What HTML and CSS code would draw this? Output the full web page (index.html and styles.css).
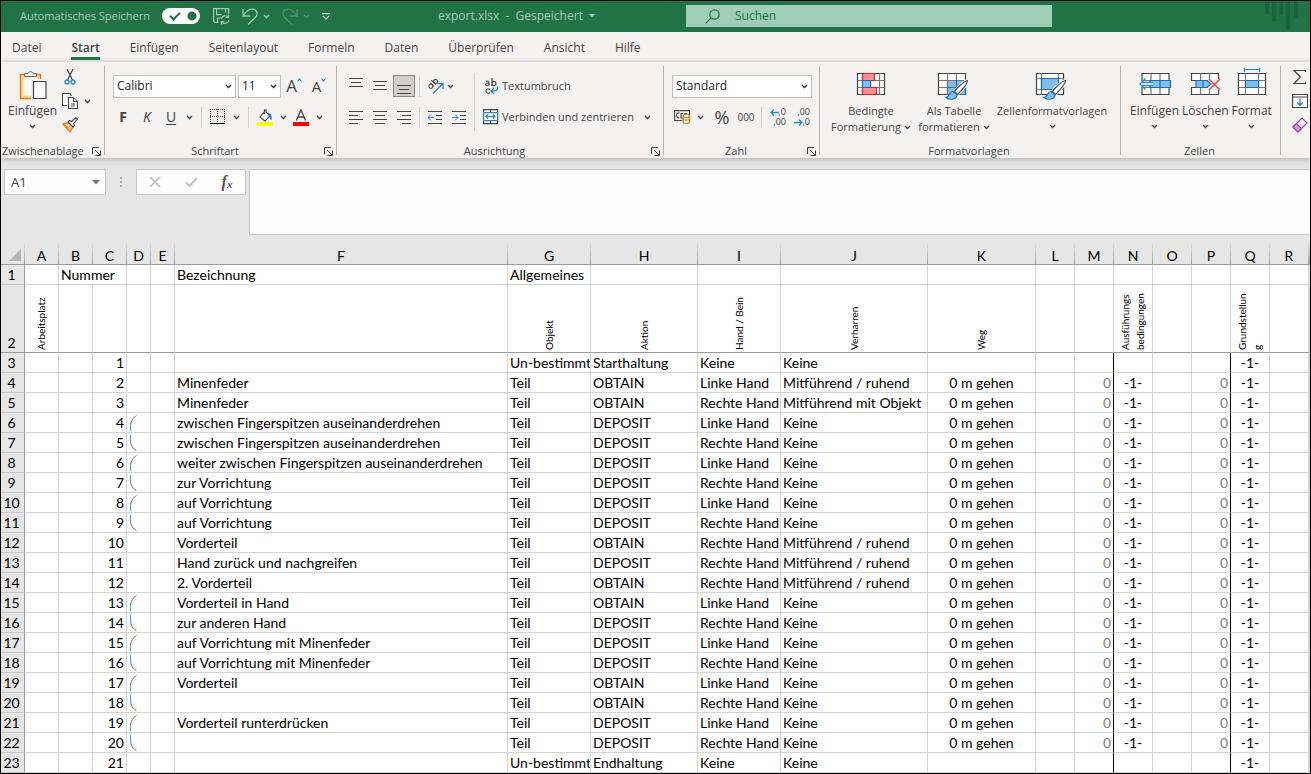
FILE: index.html
```html
<!DOCTYPE html>
<html lang="de">
<head>
<meta charset="utf-8">
<title>export.xlsx</title>
<link rel="stylesheet" href="styles.css">
</head>
<body>
<svg class="defs" aria-hidden="true">
  <symbol id="chev" viewBox="0 0 7 5"><path d="M1 1l2.500 2.500L6 1" fill="none" stroke="currentColor" stroke-width="1.300"/></symbol>
  <symbol id="launch" viewBox="0 0 9 9"><path d="M.5 7V.5H7M3 3l5 5M8.500 3.500v5h-5" fill="none" stroke="#444"/></symbol>
  <symbol id="arc-top" viewBox="0 0 8 16"><path d="M7.500.5C4 2.500 2 6 1.500 10" fill="none" stroke="#86705f"/><path d="M1.500 8v8" stroke="#5aa0e0" stroke-width="1.200"/></symbol>
  <symbol id="arc-bot" viewBox="0 0 8 16"><path d="M7.500 15.500C4 14 2 11 1.500 7" fill="none" stroke="#86705f"/><path d="M1.500 0v8" stroke="#5aa0e0" stroke-width="1.200"/></symbol>
</svg>
<header class="titlebar">
  <div class="quick">
    <label class="autosave">Automatisches Speichern
      <input type="checkbox" class="toggle" checked>
    </label>
    <button class="ico" aria-label="Speichern"><svg width="17" height="17" viewBox="0 0 17 17" fill="none" stroke="#a0cdb5" stroke-width="1.200"><path d="M5.500 14.500H2L.6 13V.6h15V6M3.600.6v6h5M12.500.6v4M4.500 14.500v-4.500h3M8.200 11a4 4 0 0 1 7-1.800M15.500 6.500v3h-3M16 12a4 4 0 0 1-7 2M8.500 16.500v-3h3"/></svg></button>
    <button class="ico" aria-label="Rückgängig"><svg width="16" height="17" viewBox="0 0 16 17" fill="none" stroke="#a0cdb5" stroke-width="1.300"><path d="M1 1v7h7M1.500 7.500C4 3.500 7 1.200 10 1.200c5 0 6.500 5 3.500 8L6 16.500"/></svg></button>
    <button class="mini" aria-label="Rückgängig-Liste"><svg width="7" height="5"><use href="#chev"/></svg></button>
    <button class="ico dim" aria-label="Wiederholen"><svg width="16" height="17" viewBox="0 0 16 17" fill="none" stroke="#a0cdb5" stroke-width="1.300"><path d="M15 1v7H8M14.500 7.500C12 3.500 9 1.200 6 1.200c-5 0-6.500 5-3.500 8L10 16.500"/></svg></button>
    <button class="mini dim" aria-label="Wiederholen-Liste"><svg width="7" height="5"><use href="#chev"/></svg></button>
    <button class="mini qat" aria-label="Symbolleiste anpassen"><svg width="8" height="7" viewBox="0 0 8 7" fill="none" stroke="#c3e0d0" stroke-width="1.200"><path d="M0 .6h8M1 3l3 3 3-3"/></svg></button>
  </div>
  <div class="doc">export.xlsx&nbsp; -&nbsp; Gespeichert <svg width="6" height="4" viewBox="0 0 6 4"><path d="M0 0h6L3 3.500z" fill="#a0cdb5"/></svg></div>
  <label class="search"><svg width="15" height="15" viewBox="0 0 15 15" fill="none" stroke="#217346" stroke-width="1.200"><circle cx="9.500" cy="5.500" r="4.700"/><path d="M6.200 8.800L.6 14.400"/></svg><input type="text" placeholder="Suchen" aria-label="Suchen"></label>
  <svg class="deco" width="36" height="30" viewBox="0 0 36 30" fill="#1d6340"><path d="M0 0h4v13H0zM7 0h4v20H7zM14 0h4v14h-4zM21 0h4v29h-4zM29 0h4v17h-4z"/></svg>
</header>
<nav class="tabs">
  <a href="#">Datei</a><a href="#" class="on">Start</a><a href="#">Einfügen</a><a href="#">Seitenlayout</a><a href="#">Formeln</a><a href="#">Daten</a><a href="#">Überprüfen</a><a href="#">Ansicht</a><a href="#">Hilfe</a>
</nav>
<main class="ribbon">
  <section class="group clip">
    <div class="body">
      <button class="big"><svg width="28" height="30" viewBox="0 0 28 30"><path d="M1.500 4.500h20v24h-20z" fill="#fbd98a" stroke="#e07b16" stroke-width="1.400"/><path d="M4.500 7.500h14v18h-14z" fill="#fafafa"/><path d="M5.500 6.500v-3h3.500a2.600 2.600 0 0 1 5 0h3.500v3z" fill="#fff" stroke="#6a6a6a"/><path d="M13.500 10.500h14v18h-14z" fill="#fff" stroke="#f3f2f1" stroke-width="3"/><path d="M14.500 11.500h12.500v17H14.500z" fill="#fff" stroke="#444" stroke-width="1.200"/></svg><span>Einfügen</span><svg class="chev" width="7" height="5"><use href="#chev"/></svg></button>
      <div class="stack">
        <button class="s" aria-label="Ausschneiden"><svg width="16" height="16" viewBox="0 0 16 16" fill="none"><path d="M5 0l5.500 11M11 0L5.500 11" stroke="#444" stroke-width="1.200"/><circle cx="5" cy="13" r="2" stroke="#2b88c8" stroke-width="1.300"/><circle cx="11" cy="13" r="2" stroke="#2b88c8" stroke-width="1.300"/></svg></button>
        <button class="s" aria-label="Kopieren"><svg width="16" height="16" viewBox="0 0 16 16" fill="#fff" stroke="#444" stroke-width="1.100"><path d="M5 12.500H.5V.5H8L9.500 3"/><path d="M6.500 4.500h5l4 4v7h-9z"/><path d="M11.500 4.500v4h4M9 11h4M9 13h4"/></svg><svg class="chev" width="7" height="5"><use href="#chev"/></svg></button>
        <button class="s" aria-label="Format übertragen"><svg width="16" height="16" viewBox="0 0 16 16"><path d="M1 7l6-1.500 4 4L8 15z" fill="#fbd0a0" stroke="#e07b16" stroke-width="1.300"/><path d="M3 9l3 1M5 12l2-1.500" stroke="#e07b16"/><path d="M6 5l5 5 1.500-1.500-1-2L15.500 2 14 .6 9.500 4.500l-2-1z" fill="#fff" stroke="#444" stroke-width="1.100"/></svg></button>
      </div>
    </div>
    <h2>Zwischenablage<button class="launch" aria-label="Zwischenablage öffnen"><svg width="9" height="9"><use href="#launch"/></svg></button></h2>
  </section>
  <section class="group font">
    <div class="rows">
      <div class="row">
        <label class="combo wide"><select aria-label="Schriftart"><option>Calibri</option></select><svg width="7" height="5"><use href="#chev"/></svg></label>
        <label class="combo num"><select aria-label="Schriftgrad"><option>11</option></select><svg width="7" height="5"><use href="#chev"/></svg></label>
        <button class="t grow" aria-label="Schriftgrad vergrößern"><b class="l1">A</b><svg width="5" height="4" viewBox="0 0 5 4"><path d="M.5 3.500l2-2.500 2 2.500" fill="none" stroke="#2b88c8" stroke-width="1.200"/></svg></button>
        <button class="t grow" aria-label="Schriftgrad verkleinern"><b class="l2">A</b><svg width="5" height="4" viewBox="0 0 5 4"><path d="M.5.5l2 2.500 2-2.500" fill="none" stroke="#2b88c8" stroke-width="1.200"/></svg></button>
      </div>
      <div class="row">
        <button class="t bold">F</button><button class="t ital">K</button><button class="t und">U</button><button class="c" aria-label="Unterstreichung"><svg width="7" height="5"><use href="#chev"/></svg></button>
        <i class="sep"></i>
        <button class="t" aria-label="Rahmen"><svg width="16" height="16" viewBox="0 0 16 16" shape-rendering="crispEdges"><path d="M0 .5h15M.5 0v14M14.500 0v14M7.500 0v14M0 7.500h15" stroke="#444" stroke-dasharray="1 1"/><path d="M0 14.500h15" stroke="#000" stroke-width="1"/></svg></button><button class="c" aria-label="Rahmenarten"><svg width="7" height="5"><use href="#chev"/></svg></button>
        <i class="sep"></i>
        <button class="t" aria-label="Füllfarbe"><svg width="17" height="17" viewBox="0 0 17 17"><path d="M8 2L3 8l5 4 5-5-4-4V.8L7.500 1v4" fill="#fff" stroke="#444" stroke-width="1.100"/><path d="M11 4.500c2.500 0 3.500 2 3 6-.5-2-1-3-2-4" fill="#1e6fae" stroke="#1e6fae"/><path d="M0 13h16v4H0z" fill="#ff0"/></svg></button><button class="c" aria-label="Füllfarben"><svg width="7" height="5"><use href="#chev"/></svg></button>
        <button class="t" aria-label="Schriftfarbe"><svg width="16" height="17" viewBox="0 0 16 17"><path d="M3.500 11.500L8 .8l4.500 10.700M5 8h6" fill="none" stroke="#444" stroke-width="1.300"/><path d="M0 13h16v4H0z" fill="red"/></svg></button><button class="c" aria-label="Schriftfarben"><svg width="7" height="5"><use href="#chev"/></svg></button>
      </div>
    </div>
    <h2><span>Schriftart</span><button class="launch" aria-label="Schriftart öffnen"><svg width="9" height="9"><use href="#launch"/></svg></button></h2>
  </section>
  <section class="group align">
    <div class="cols">
      <div class="rows">
        <div class="row">
          <button class="t" aria-label="Oben"><svg class="ln" viewBox="0 0 14 16"><path d="M0 .5h14M2 4.500h10M0 8.500h14"/></svg></button><button class="t" aria-label="Mitte"><svg class="ln" viewBox="0 0 14 16"><path d="M0 3.500h14M2 7.500h10M0 11.500h14"/></svg></button><button class="t on" aria-label="Unten"><svg class="ln" viewBox="0 0 14 16"><path d="M0 7.500h14M2 11.500h10M0 15.500h14"/></svg></button>
          <i class="sep"></i>
          <button class="t" aria-label="Ausrichtung"><svg width="17" height="16" viewBox="0 0 17 16" fill="none" stroke="#444" stroke-width="1.100"><g transform="rotate(-45 6 6)"><circle cx="3" cy="6" r="2"/><path d="M5 3.500v5M7.500 2v6.500"/><circle cx="9.500" cy="6" r="2"/></g><path d="M6 15.500L15.500 6M10.500 5.500h5.500v5.500" stroke="#2b88c8" stroke-width="1.300"/></svg></button><button class="c" aria-label="Ausrichtungen"><svg width="7" height="5"><use href="#chev"/></svg></button>
        </div>
        <div class="row">
          <button class="t" aria-label="Links"><svg class="ln" viewBox="0 0 14 16"><path d="M0 2.500h14M0 6.500h9M0 10.500h14M0 14.500h9"/></svg></button><button class="t" aria-label="Zentriert"><svg class="ln" viewBox="0 0 14 16"><path d="M0 2.500h14M2 6.500h10M0 10.500h14M2 14.500h10"/></svg></button><button class="t" aria-label="Rechts"><svg class="ln" viewBox="0 0 14 16"><path d="M0 2.500h14M5 6.500h9M0 10.500h14M5 14.500h9"/></svg></button>
          <i class="sep"></i>
          <button class="t" aria-label="Einzug verkleinern"><svg class="ln" viewBox="0 0 14 16"><path d="M0 2.500h14M8 6.500h6M8 10.500h6M0 14.500h14"/><path class="bl" d="M0 8.500h6M3 5.500l-3 3 3 3"/></svg></button><button class="t" aria-label="Einzug vergrößern"><svg class="ln" viewBox="0 0 14 16"><path d="M0 2.500h14M8 6.500h6M8 10.500h6M0 14.500h14"/><path class="bl" d="M0 8.500h6M3 5.500l3 3-3 3"/></svg></button>
        </div>
      </div>
      <i class="sep tall"></i>
      <div class="rows">
        <button class="row txt"><svg width="16" height="17" viewBox="0 0 16 17" fill="none" stroke="#444" stroke-width="1.200"><path d="M3 3.500c3-1 3 .5 3 4M6 5C3 5 2.500 5.500 2.500 6.500 2.500 8 6 8 6 6M9 0v8M9 4.500c2-2 4-1 4 1s-2 3-4 1M7 11.500c-2-1.500-4-.5-4 1.500s2 3 4 1.500"/><path d="M14.500 8.500c0 4-1 4.500-6 4.500M11 10l-3 3 3 3" stroke="#2b88c8" stroke-width="1.400"/></svg>Textumbruch</button>
        <button class="row txt"><svg width="16" height="16" viewBox="0 0 16 16" fill="#fff" stroke="#444" stroke-width="1.200"><path d="M.6.6h14v14H.6zM7.500.6v14"/><path d="M.6 3.600h14v8H.6zM3 7.600h9M5 5.500L3 7.600l2 2.100M10 5.500l2 2.100-2 2.100" stroke="#2b88c8"/></svg>Verbinden und zentrieren<svg class="chev" width="7" height="5"><use href="#chev"/></svg></button>
      </div>
    </div>
    <h2><span>Ausrichtung</span><button class="launch" aria-label="Ausrichtung öffnen"><svg width="9" height="9"><use href="#launch"/></svg></button></h2>
  </section>
  <section class="group number">
    <div class="rows">
      <div class="row"><label class="combo full"><select aria-label="Zahlenformat"><option>Standard</option></select><svg width="7" height="5"><use href="#chev"/></svg></label></div>
      <div class="row">
        <button class="t" aria-label="Währung"><svg width="17" height="14" viewBox="0 0 17 14" fill="none" stroke="#444" stroke-width="1.100"><path d="M8 10.500H.6V.6h15V5M5.500 3C3 2.500 2.500 4 2.500 5.500S3.500 8 5.500 8M9 8H7V3.500h2M11 5V3.500h2"/><path d="M9 6v6c0 2 6.500 2 6.500 0V6c0-2-6.500-2-6.500 0c0 2 6.500 2 6.500 0M9 9c0 1.500 6.500 1.500 6.500 0" fill="#fff" stroke="#e07b16" stroke-width="1.200"/></svg></button><button class="c" aria-label="Währungen"><svg width="7" height="5"><use href="#chev"/></svg></button>
        <button class="t pct">%</button><button class="t zeros">000</button>
        <i class="sep"></i>
        <button class="t dec" aria-label="Dezimalstelle hinzufügen"><span><svg width="9" height="7" viewBox="0 0 9 7"><path d="M9 3.500H1M4 .5l-3 3 3 3" fill="none" stroke="#2b88c8" stroke-width="1.300"/></svg>,0</span><span>,00</span></button><button class="t dec" aria-label="Dezimalstelle entfernen"><span>,00</span><span><svg width="9" height="7" viewBox="0 0 9 7"><path d="M0 3.500h8M5 .5l3 3-3 3" fill="none" stroke="#2b88c8" stroke-width="1.300"/></svg>,0</span></button>
      </div>
    </div>
    <h2><span>Zahl</span><button class="launch" aria-label="Zahl öffnen"><svg width="9" height="9"><use href="#launch"/></svg></button></h2>
  </section>
  <section class="group styles">
    <div class="body">
      <button class="big w1"><svg width="30" height="30" viewBox="0 0 30 30" stroke-width="1.200"><path d="M1.500 2.500h27v21h-27z" fill="#fff" stroke="#444"/><path d="M1.500 9.500h27M1.500 16.500h27M6.500 2.500v21M23.500 2.500v21" stroke="#777"/><path d="M6.500 2.500h12v7h-12zM6.500 16.500h14v7h-14z" fill="#ff8f96" stroke="#d9202a"/><path d="M6.500 9.500h8v7h-8z" fill="#83beec" stroke="#1a6fb8"/></svg><span>Bedingte</span><span>Formatierung <svg width="7" height="5"><use href="#chev"/></svg></span></button>
      <button class="big w2"><svg width="34" height="30" viewBox="0 -1 34 30" stroke-width="1.200"><path d="M1.500 1.500h27v21h-27z" fill="#fff" stroke="#444"/><path d="M10.500 8.500h18v14h-18z" fill="#83beec" stroke="#1a6fb8"/><path d="M1.500 8.500h27M1.500 15.500h27M10.500 1.500v21M19.500 1.500v21" stroke="#777"/><path d="M10.500 15.500h18M19.500 8.500v14" stroke="#1a6fb8"/><path d="M30.500 8.500C27 9 19 17 17.500 19.500l3 3C23 20 30.500 12 30.500 8.500z" fill="#fff" stroke="#f3f2f1" stroke-width="3"/><path d="M30.500 8.500C27 9 19 17 17.500 19.500l3 3C23 20 30.500 12 30.500 8.500z" fill="#fff" stroke="#555"/><path d="M16 19.500c-4 0-3 5-7 6 4 3 11 2 11-3z" fill="#83beec" stroke="#1a6fb8"/></svg><span>Als Tabelle</span><span>formatieren <svg width="7" height="5"><use href="#chev"/></svg></span></button>
      <button class="big w3"><svg width="34" height="30" viewBox="0 -1 34 30" stroke-width="1.200"><path d="M1.500 1.500h27v21h-27z" fill="#fff" stroke="#444"/><path d="M1.500 6.500h27M1.500 17.500h27M6.500 1.500v21M23.500 1.500v21" stroke="#777"/><path d="M6.500 6.500h17v11h-17z" fill="#83beec" stroke="#1a6fb8"/><path d="M30.500 8.500C27 9 19 17 17.500 19.500l3 3C23 20 30.500 12 30.500 8.500z" fill="#fff" stroke="#f3f2f1" stroke-width="3"/><path d="M30.500 8.500C27 9 19 17 17.500 19.500l3 3C23 20 30.500 12 30.500 8.500z" fill="#fff" stroke="#555"/><path d="M16 19.500c-4 0-3 5-7 6 4 3 11 2 11-3z" fill="#83beec" stroke="#1a6fb8"/></svg><span>Zellenformatvorlagen</span><svg class="chev" width="7" height="5"><use href="#chev"/></svg></button>
    </div>
    <h2><span>Formatvorlagen</span></h2>
  </section>
  <section class="group cells">
    <div class="body">
      <button class="big"><svg width="32" height="30" viewBox="0 -1 32 30" stroke-width="1.200"><path d="M3 1.500h27v21H3z" fill="#fff" stroke="#444"/><path d="M3 8.500h27M3 15.500h27M12 1.500v21M21 1.500v21" stroke="#777"/><path d="M0 9h14v6H0z" fill="#f3f2f1"/><path d="M11 8.500h20.500v7H11zM21 8.500v7" fill="#83beec" stroke="#1a6fb8"/><path d="M2 10.500h12v3H2z" fill="#fff"/><path d="M14 10.500H3M14 13.500H3M6.500 6.500L1 12l5.500 5.500" fill="none" stroke="#2b88c8" stroke-width="1.300"/></svg><span>Einfügen</span><svg class="chev" width="7" height="5"><use href="#chev"/></svg></button>
      <button class="big"><svg width="32" height="30" viewBox="0 -1 32 30" stroke-width="1.200"><path d="M2.500 8.500v-7h27v7zM2.500 15.500v7h27v-7z" fill="#fff" stroke="#444"/><path d="M11.500 1.500v7M20.500 1.500v7M11.500 15.500v7M20.500 15.500v7" stroke="#777"/><path d="M19 7h12v11H19z" fill="#f3f2f1"/><path d="M7 8.500h11l4 3.500-4 3.500H7zM14 8.500v7" fill="#83beec" stroke="#1a6fb8"/><path d="M20 7l11 11M31 7L20 18" stroke="#e8484c" stroke-width="1.500"/></svg><span>Löschen</span><svg class="chev" width="7" height="5"><use href="#chev"/></svg></button>
      <button class="big"><svg width="30" height="30" viewBox="0 5 30 30" stroke-width="1.200"><path d="M1.500 7.500h27v21h-27z" fill="#fff" stroke="#444"/><path d="M1.500 14.500h27M1.500 21.500h27M8.500 7.500v21M21.500 7.500v21" stroke="#777"/><path d="M8.500 14.500h13v7h-13z" fill="#83beec" stroke="#1a6fb8"/><path d="M7.500 2v4M22.500 2v4M7.500 3.500h15" stroke="#2b88c8"/></svg><span>Format</span><svg class="chev" width="7" height="5"><use href="#chev"/></svg></button>
    </div>
    <h2><span>Zellen</span></h2>
  </section>
  <section class="group edit">
    <div class="stack">
      <button class="s" aria-label="Summe"><svg width="16" height="16" viewBox="0 0 16 16" fill="none" stroke="#444" stroke-width="1.200"><path d="M13.500 3V1.500H2L8.500 8 2 14.500h11.500V13"/></svg></button>
      <button class="s" aria-label="Füllbereich"><svg width="16" height="16" viewBox="0 0 16 16" fill="#fff" stroke="#444" stroke-width="1.200"><path d="M.6 1.500h15v13H.6zM.6 4h15"/><path d="M8 5.500v7M5 9.500l3 3 3-3" fill="none" stroke="#2b88c8" stroke-width="1.300"/></svg></button>
      <button class="s" aria-label="Löschen"><svg width="16" height="16" viewBox="0 0 16 16" stroke="#9b3fa5" stroke-width="1.200"><path d="M1 10L10 1l5 5-9 9z" fill="#fff"/><path d="M1 10l3.500-3.500 5 5L6 15z" fill="#d59bdb"/></svg></button>
    </div>
  </section>
</main>
<div class="formula">
  <label class="name"><input type="text" value="A1" aria-label="Namenfeld"><svg width="8" height="5" viewBox="0 0 8 5"><path d="M0 0h8L4 4.500z" fill="#777"/></svg></label>
  <svg class="dots" width="3" height="11" viewBox="0 0 3 11" fill="#aaa"><path d="M0 0h2v2H0zM0 4h2v2H0zM0 8h2v2H0z"/></svg>
  <div class="fx">
    <button aria-label="Abbrechen"><svg width="12" height="10" viewBox="0 0 12 10"><path d="M1 0l10 10M11 0L1 10" stroke="#bdbdbd" stroke-width="1.600"/></svg></button>
    <button aria-label="Eingeben"><svg width="13" height="10" viewBox="0 0 13 10"><path d="M1 5.500L4.500 9 12 1" fill="none" stroke="#c4c4c4" stroke-width="2"/></svg></button>
    <button class="fn" aria-label="Funktion einfügen">f<sub>x</sub></button>
  </div>
  <textarea aria-label="Bearbeitungsleiste"></textarea>
</div>
<div class="sheet">
<table>
<colgroup><col class="rh"><col class="a"><col class="a"><col class="a"><col class="d"><col class="d"><col class="f"><col class="g"><col class="h"><col class="g"><col class="j"><col class="k"><col class="n"><col class="n"><col class="n"><col class="n"><col class="n"><col class="n"><col class="n"><col></colgroup>
<thead>
<tr><th><svg width="12" height="12" viewBox="0 0 12 12"><path d="M12 0v12H0z" fill="#b4b4b4"/></svg></th><th>A<th>B<th>C<th>D<th>E<th>F<th>G<th>H<th>I<th>J<th>K<th>L<th>M<th>N<th>O<th>P<th>Q<th>R<th></tr>
</thead>
<tbody>
<tr><th>1<td><td class="merged" colspan="2">Nummer<td><td><td>Bezeichnung<td>Allgemeines<td><td><td><td><td><td><td><td><td><td><td></tr>
<tr class="heads"><th>2<td><div>Arbeitsplatz</div><td><td><td><td><td><td><div>Objekt</div><td><div>Aktion</div><td><div>Hand / Bein</div><td><div>Verharren</div><td><div>Weg</div><td><td><td><div>Ausführungs<br>bedingungen</div><td><td><td><div>Grundstellun<br>g</div><td><td></tr>
</tbody>
<tbody class="data">
<tr><th>3<td><td><td>1<td><td><td><td>Un-bestimmt<td>Starthaltung<td>Keine<td>Keine<td><td><td><td><td><td><td>-1-<td><td></tr>
<tr><th>4<td><td><td>2<td><td><td>Minenfeder<td>Teil<td>OBTAIN<td>Linke Hand<td>Mitführend / ruhend<td>0 m gehen<td><td>0<td>-1-<td><td>0<td>-1-<td><td></tr>
<tr><th>5<td><td><td>3<td><td><td>Minenfeder<td>Teil<td>OBTAIN<td>Rechte Hand<td>Mitführend mit Objekt<td>0 m gehen<td><td>0<td>-1-<td><td>0<td>-1-<td><td></tr>
<tr><th>6<td><td><td>4<td><svg><use href="#arc-top"/></svg><td><td>zwischen Fingerspitzen auseinanderdrehen<td>Teil<td>DEPOSIT<td>Linke Hand<td>Keine<td>0 m gehen<td><td>0<td>-1-<td><td>0<td>-1-<td><td></tr>
<tr><th>7<td><td><td>5<td><svg><use href="#arc-bot"/></svg><td><td>zwischen Fingerspitzen auseinanderdrehen<td>Teil<td>DEPOSIT<td>Rechte Hand<td>Keine<td>0 m gehen<td><td>0<td>-1-<td><td>0<td>-1-<td><td></tr>
<tr><th>8<td><td><td>6<td><svg><use href="#arc-top"/></svg><td><td>weiter zwischen Fingerspitzen auseinanderdrehen<td>Teil<td>DEPOSIT<td>Linke Hand<td>Keine<td>0 m gehen<td><td>0<td>-1-<td><td>0<td>-1-<td><td></tr>
<tr><th>9<td><td><td>7<td><svg><use href="#arc-bot"/></svg><td><td>zur Vorrichtung<td>Teil<td>DEPOSIT<td>Rechte Hand<td>Keine<td>0 m gehen<td><td>0<td>-1-<td><td>0<td>-1-<td><td></tr>
<tr><th>10<td><td><td>8<td><svg><use href="#arc-top"/></svg><td><td>auf Vorrichtung<td>Teil<td>DEPOSIT<td>Linke Hand<td>Keine<td>0 m gehen<td><td>0<td>-1-<td><td>0<td>-1-<td><td></tr>
<tr><th>11<td><td><td>9<td><svg><use href="#arc-bot"/></svg><td><td>auf Vorrichtung<td>Teil<td>DEPOSIT<td>Rechte Hand<td>Keine<td>0 m gehen<td><td>0<td>-1-<td><td>0<td>-1-<td><td></tr>
<tr><th>12<td><td><td>10<td><td><td>Vorderteil<td>Teil<td>OBTAIN<td>Rechte Hand<td>Mitführend / ruhend<td>0 m gehen<td><td>0<td>-1-<td><td>0<td>-1-<td><td></tr>
<tr><th>13<td><td><td>11<td><td><td>Hand zurück und nachgreifen<td>Teil<td>DEPOSIT<td>Rechte Hand<td>Mitführend / ruhend<td>0 m gehen<td><td>0<td>-1-<td><td>0<td>-1-<td><td></tr>
<tr><th>14<td><td><td>12<td><td><td>2. Vorderteil<td>Teil<td>OBTAIN<td>Rechte Hand<td>Mitführend / ruhend<td>0 m gehen<td><td>0<td>-1-<td><td>0<td>-1-<td><td></tr>
<tr><th>15<td><td><td>13<td><svg><use href="#arc-top"/></svg><td><td>Vorderteil in Hand<td>Teil<td>OBTAIN<td>Linke Hand<td>Keine<td>0 m gehen<td><td>0<td>-1-<td><td>0<td>-1-<td><td></tr>
<tr><th>16<td><td><td>14<td><svg><use href="#arc-bot"/></svg><td><td>zur anderen Hand<td>Teil<td>DEPOSIT<td>Rechte Hand<td>Keine<td>0 m gehen<td><td>0<td>-1-<td><td>0<td>-1-<td><td></tr>
<tr><th>17<td><td><td>15<td><svg><use href="#arc-top"/></svg><td><td>auf Vorrichtung mit Minenfeder<td>Teil<td>DEPOSIT<td>Linke Hand<td>Keine<td>0 m gehen<td><td>0<td>-1-<td><td>0<td>-1-<td><td></tr>
<tr><th>18<td><td><td>16<td><svg><use href="#arc-bot"/></svg><td><td>auf Vorrichtung mit Minenfeder<td>Teil<td>DEPOSIT<td>Rechte Hand<td>Keine<td>0 m gehen<td><td>0<td>-1-<td><td>0<td>-1-<td><td></tr>
<tr><th>19<td><td><td>17<td><svg><use href="#arc-top"/></svg><td><td>Vorderteil<td>Teil<td>OBTAIN<td>Linke Hand<td>Keine<td>0 m gehen<td><td>0<td>-1-<td><td>0<td>-1-<td><td></tr>
<tr><th>20<td><td><td>18<td><svg><use href="#arc-bot"/></svg><td><td><td>Teil<td>OBTAIN<td>Rechte Hand<td>Keine<td>0 m gehen<td><td>0<td>-1-<td><td>0<td>-1-<td><td></tr>
<tr><th>21<td><td><td>19<td><svg><use href="#arc-top"/></svg><td><td>Vorderteil runterdrücken<td>Teil<td>DEPOSIT<td>Linke Hand<td>Keine<td>0 m gehen<td><td>0<td>-1-<td><td>0<td>-1-<td><td></tr>
<tr><th>22<td><td><td>20<td><svg><use href="#arc-bot"/></svg><td><td><td>Teil<td>DEPOSIT<td>Rechte Hand<td>Keine<td>0 m gehen<td><td>0<td>-1-<td><td>0<td>-1-<td><td></tr>
<tr><th>23<td><td><td>21<td><td><td><td>Un-bestimmt<td>Endhaltung<td>Keine<td>Keine<td><td><td><td><td><td><td>-1-<td><td></tr>
</tbody>
</table>
</div>
</body>
</html>
```
FILE: styles.css
```css
* { box-sizing: border-box; }
body {
  margin: 0;
  border: 1px solid #000;
  background: #e6e6e6;
  font: 12px/16px "Open Sans", "Noto Sans", sans-serif;
  color: #444;
  min-height: 100vh;
  overflow: hidden;
}
button, input, select, textarea {
  font: inherit;
  color: inherit;
  border: 0;
  padding: 0;
  margin: 0;
  background: none;
  border-radius: 0;
}
svg { display: block; flex: none; }
.defs { position: absolute; width: 0; height: 0; }

/* title bar */
.titlebar {
  display: grid;
  grid-template-columns: 437fr 248fr 366fr 258fr;
  align-items: center;
  height: 31px;
  padding-bottom: 3px;
  background: #217346;
  color: #a0cdb5;
}
.quick { display: flex; align-items: center; padding-left: 19px; }
.autosave { display: flex; align-items: center; gap: 12px; margin-right: 13px; white-space: nowrap; font-size: 11px; }
.toggle {
  appearance: none;
  width: 38px;
  height: 16px;
  border-radius: 8px;
  background:
    radial-gradient(circle at 30px 8px, #217346 4px, transparent 5px),
    #fff;
  display: grid;
  align-items: center;
}
.toggle::before {
  content: "";
  width: 8px;
  height: 4px;
  margin: 0 0 3px 8px;
  border: solid #217346;
  border-width: 0 0 2px 2px;
  transform: rotate(-45deg);
}
.ico { margin-right: 12px; }
.ico + .mini { margin: 0 12px 0 -7px; }
.dim { opacity: .35; }
.mini { color: #a0cdb5; }
.doc { display: flex; align-items: center; gap: 6px; white-space: nowrap; }
.search {
  display: flex;
  align-items: center;
  gap: 15px;
  height: 22px;
  padding-left: 19px;
  background: #9fcdb5;
  color: #217346;
}
.search input { flex: 1; min-width: 0; outline: 0; }
.search ::placeholder { color: #217346; opacity: 1; }
.deco { justify-self: end; align-self: start; margin-right: 9px; }

/* tabs */
.tabs { display: flex; gap: 30px; height: 30px; padding: 7px 11px 0; background: #f3f2f1; }
.tabs a { color: #444; text-decoration: none; height: 21px; line-height: 17px; }
.tabs .on { font-weight: 600; border-bottom: 3px solid #217346; }

/* ribbon */
.ribbon {
  display: flex;
  height: 96px;
  padding-top: 4px;
  background: #f3f2f1;
  box-shadow: 0 1px 6px #aaa;
}
.group {
  display: flex;
  flex-direction: column;
  justify-content: space-between;
  flex: none;
  height: 89px;
  border-right: 1px solid #b1b1b1;
}
.group h2 {
  display: flex;
  align-items: center;
  margin: 0;
  padding: 2px 3px 0 1px;
  height: 10px;
  font-size: 11px;
  font-weight: 400;
}
.group h2 span { flex: 1; text-align: center; }
.launch { margin-left: auto; }
.clip { width: 104px; }
.font { width: 232px; }
.align { width: 327px; }
.number { width: 156px; }
.styles { width: 301px; }
.cells { width: 160px; }
.edit { flex: 1; border: 0; min-width: 0; overflow: hidden; padding-left: 11px; }
.body { display: flex; }
.big {
  display: flex;
  flex-direction: column;
  align-items: center;
  height: 72px;
  white-space: nowrap;
}
.big > svg:first-child { margin: 4px 0 3px; overflow: visible; }
.big span { display: flex; align-items: center; gap: 3px; }
.big .chev { margin-top: 5px; }
.clip .big { margin-left: 7px; }
.clip .stack { margin-left: 5px; }
.stack { display: flex; flex-direction: column; gap: 8px; padding-top: 3px; }
.s { display: flex; align-items: center; gap: 6px; height: 16px; }
.styles .body { padding-left: 8px; gap: 2px; font-size: 11px; }
.styles .big { font-size: 11px; }
.w1 { width: 86px; }
.w2 { width: 76px; }
.w3 { width: 116px; }
.styles .big > svg:first-child, .cells .big > svg:first-child { margin: 5px 0 2px; }
.cells .body { padding-left: 9px; gap: 3px; }
.rows { display: flex; flex-direction: column; gap: 7px; padding-top: 8px; }
.row { display: flex; align-items: center; height: 24px; }
.font .rows, .number .rows { padding-left: 6px; }
.combo {
  display: grid;
  grid-template-columns: 1fr 10px;
  align-items: center;
  height: 23px;
  margin-left: 2px;
  background: #fff;
  border: 1px solid #c3c1bf;
  color: #222;
}
.combo select { appearance: none; grid-area: 1 / 1 / 2 / 3; padding-left: 3px; height: 21px; outline: 0; }
.combo svg { grid-area: 1 / 2; pointer-events: none; }
.wide { width: 123px; }
.num { width: 43px; }
.full { width: 140px; }
.t { display: flex; align-items: center; justify-content: center; width: 24px; height: 22px; }
.c { display: flex; align-items: center; justify-content: center; width: 12px; height: 22px; }
.grow { align-items: flex-start; margin-left: 1px; }
.grow b { font-weight: 400; line-height: 22px; }
.grow svg { margin-top: 3px; }
.l1 { font-size: 17px; }
.l2 { font-size: 15px; }
.bold { font-weight: 700; font-size: 14px; }
.ital { font-style: italic; font-size: 14px; }
.und { text-decoration: underline; font-size: 14px; text-underline-offset: 2px; }
.sep { width: 1px; height: 21px; background: #d0cecc; margin: 0 4px 0 6px; }
.cols { display: flex; }
.align .cols { padding-left: 7px; }
.align .sep { margin: 0 3px; }
.align .tall { height: 58px; margin: 7px 8px 0 3px; }
.align .c { margin-left: -3px; }
.t.on { background: #d2d0ce; border: 1px solid #8a8886; width: 22px; margin: 0 1px; }
.ln { width: 14px; height: 16px; fill: none; stroke: #444; stroke-width: 1; }
.ln .bl { stroke: #2b88c8; }
.txt { gap: 3px; white-space: nowrap; font-size: 11px; }
.txt .chev { margin-left: 7px; }
.number .sep { margin: 0 4px 0 3px; }
.pct { font-size: 18px; margin-left: 4px; }
.zeros { font-size: 10px; }
.dec { flex-direction: column; align-items: flex-end; font-size: 9px; line-height: 10px; width: 20px; margin-right: 4px; }
.dec span { display: flex; align-items: center; height: 10px; }

/* formula bar */
.formula { display: flex; padding: 11px 0 9px 3px; align-items: flex-start; }
.name { display: flex; align-items: center; width: 102px; height: 26px; background: #fdfdfd; border: 1px solid #c6c6c6; }
.name input { flex: 1; min-width: 0; padding-left: 6px; outline: 0; font-size: 13px; }
.name svg { margin-right: 5px; }
.dots { margin: 8px 13px 0 14px; }
.fx { display: flex; width: 110px; height: 26px; background: #fdfdfd; border: 1px solid #c6c6c6; }
.fx button { flex: 1; display: flex; align-items: center; justify-content: center; }
.fn { font: italic 700 16px/16px "Liberation Serif", serif; color: #555; }
.fn sub { font-size: 11px; line-height: 11px; vertical-align: baseline; padding-top: 4px; }
.formula textarea { flex: 1; height: 66px; margin-left: 3px; background: #fdfdfd; border: 1px solid #c6c6c6; border-right: 0; resize: none; outline: 0; }

/* sheet */
.sheet { color: #000; font: 14px/19px Lato, "Open Sans", sans-serif; }
table { table-layout: fixed; width: 100%; border-spacing: 0; }
.rh, .d { width: 24px; }
.a { width: 34px; }
.f { width: 333px; }
.g { width: 83px; }
.h { width: 107px; }
.j { width: 147px; }
.k { width: 108px; }
.n { width: 39px; }
th, td {
  height: 20px;
  padding: 0;
  font-weight: 400;
  white-space: nowrap;
  overflow: hidden;
}
th { text-align: center; background: #e6e6e6; }
thead th {
  height: 21px;
  padding-top: 1px;
  border-right: 1px solid;
  border-image: linear-gradient(#e0e0e0, #9b9b9b) 1;
  border-image-width: 0 1px 0 0;
  box-shadow: inset 0 -1px #9b9b9b;
}
thead svg { margin-left: 8px; }
tbody th { border-right: 1px solid #9b9b9b; border-bottom: 1px solid #c6c6c6; padding-right: 2px; }
td { background: #fff; border-right: 1px solid #d4d4d4; border-bottom: 1px solid #d4d4d4; padding-left: 2px; }
.heads > * { height: 68px; vertical-align: bottom; border-bottom-color: #9b9b9b; }
.heads td { padding: 0 0 2px; }
.heads div {
  writing-mode: vertical-rl;
  transform: rotate(180deg);
  height: 62px;
  margin: auto;
  font-size: 10px;
  line-height: 15px;
}
.data td:nth-child(4) { text-align: right; padding-right: 2px; }
.data td:nth-child(12), .data td:nth-child(15), .data td:nth-child(18) { text-align: center; padding: 0; }
.data td:nth-child(14), .data td:nth-child(17) { text-align: right; padding-right: 2px; color: #808080; border-right-color: #000; }
.data svg { width: 8px; height: 16px; }
```
